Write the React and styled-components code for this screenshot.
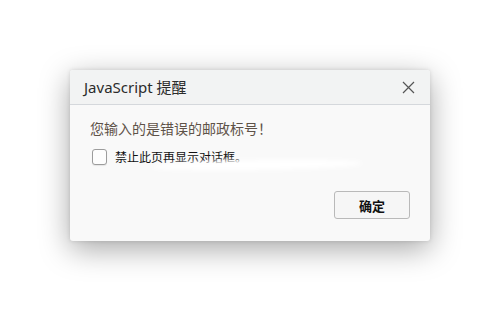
import React, { useState } from 'react';
import styled, { createGlobalStyle } from 'styled-components';

const GlobalStyle = createGlobalStyle`
    html, body {
        margin: 0;
        padding: 0;
        background: #ffffff;
    }
`;

const Page = styled.div`
    width: 500px;
    height: 311px;
    display: flex;
    align-items: center;
    justify-content: center;
    font-family: "Noto Sans", "Noto Sans CJK SC", sans-serif;
`;

const Dialog = styled.div`
    position: relative;
    width: 360px;
    height: 171px;
    display: flex;
    flex-direction: column;
    background: #f9f9f9;
    border-radius: 3px;
    box-shadow: 0 8px 30px rgba(0, 0, 0, 0.35), 0 0 4px rgba(0, 0, 0, 0.12);
    overflow: hidden;
`;

const Header = styled.div`
    height: 34px;
    display: flex;
    align-items: center;
    justify-content: space-between;
    padding: 0 12px 0 14px;
    background: #f2f3f3;
    border-bottom: 1px solid #d5d8dc;
`;

const Title = styled.div`
    font-size: 15px;
    color: #2b2b2b;
    margin-top: -1px;
`;

const CloseButton = styled.button`
    width: 20px;
    height: 20px;
    padding: 0;
    border: none;
    background: transparent;
    display: flex;
    align-items: center;
    justify-content: center;
`;

const Body = styled.div`
    flex: 1;
    display: flex;
    flex-direction: column;
    padding: 13px 20px 0 20px;
`;

const Message = styled.div`
    font-family: "Noto Sans CJK SC", sans-serif;
    font-size: 14px;
    color: #5e5248;
    line-height: 20px;
    text-spacing-trim: space-all;
`;

const CheckRow = styled.label`
    position: relative;
    display: flex;
    align-items: center;
    gap: 8px;
    margin-top: 10px;
    margin-left: 2px;
    font-family: "Noto Sans CJK SC", sans-serif;
    font-size: 12px;
    color: #111;
`;

const Box = styled.span`
    width: 15px;
    height: 16px;
    border: 1px solid #9c9c9c;
    border-radius: 3px;
    background: ${(p) => (p.checked ? '#3a6fd8' : '#fdfdfd')};
    box-shadow: 0 1px 1px rgba(0, 0, 0, 0.08);
    box-sizing: border-box;
`;

const Smear = styled.span`
    position: absolute;
    left: 60px;
    top: 12px;
    width: 210px;
    height: 10px;
    background: #ffffff;
    border-radius: 50%;
    filter: blur(2px);
    transform: rotate(-1deg);
`;

const Footer = styled.div`
    display: flex;
    justify-content: flex-end;
    margin-top: auto;
    padding-bottom: 22px;
`;

const OkButton = styled.button`
    width: 76px;
    height: 28px;
    border: 1px solid #b9b9b9;
    border-radius: 3px;
    background: #f6f6f6;
    font-family: "Noto Sans CJK SC", sans-serif;
    font-size: 13px;
    font-weight: 600;
    color: #111;
`;

const App = () => {
    const [checked, setChecked] = useState(false);
    return (
        <Page>
            <GlobalStyle />
            <Dialog>
                <Header>
                    <Title>JavaScript 提醒</Title>
                    <CloseButton aria-label="关闭">
                        <svg width="13" height="13" viewBox="0 0 13 13">
                            <path d="M1 1 L12 12 M12 1 L1 12" stroke="#555" strokeWidth="1.2" />
                        </svg>
                    </CloseButton>
                </Header>
                <Body>
                    <Message>您输入的是错误的邮政标号！</Message>
                    <CheckRow onClick={() => setChecked(!checked)}>
                        <Box checked={checked} />
                        禁止此页再显示对话框。
                        <Smear />
                    </CheckRow>
                    <Footer>
                        <OkButton>确定</OkButton>
                    </Footer>
                </Body>
            </Dialog>
        </Page>
    );
};

export default App;
